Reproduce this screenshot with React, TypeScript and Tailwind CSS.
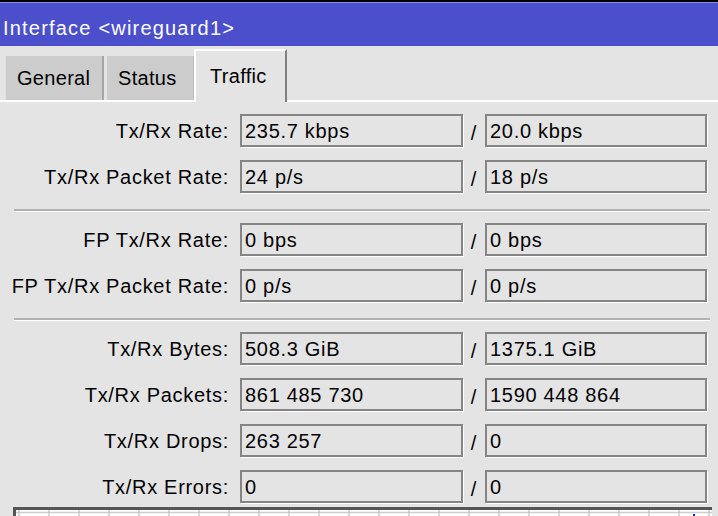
import React from 'react';

type Row = { label: string; tx: string; rx: string };

const sections: Row[][] = [
  [
    { label: 'Tx/Rx Rate:', tx: '235.7 kbps', rx: '20.0 kbps' },
    { label: 'Tx/Rx Packet Rate:', tx: '24 p/s', rx: '18 p/s' },
  ],
  [
    { label: 'FP Tx/Rx Rate:', tx: '0 bps', rx: '0 bps' },
    { label: 'FP Tx/Rx Packet Rate:', tx: '0 p/s', rx: '0 p/s' },
  ],
  [
    { label: 'Tx/Rx Bytes:', tx: '508.3 GiB', rx: '1375.1 GiB' },
    { label: 'Tx/Rx Packets:', tx: '861 485 730', rx: '1590 448 864' },
    { label: 'Tx/Rx Drops:', tx: '263 257', rx: '0' },
    { label: 'Tx/Rx Errors:', tx: '0', rx: '0' },
  ],
];

const Field: React.FC<{ value: string; width: string }> = ({ value, width }) => (
  <div
    className={`${width} h-[33px] shrink-0 border-2 border-[#858585] shadow-[1px_1px_0_#ffffff] flex items-center pl-[3px] whitespace-nowrap overflow-hidden`}
  >
    {value}
  </div>
);

const StatRow: React.FC<{ row: Row }> = ({ row }) => (
  <div className="flex items-center h-[33px] shrink-0 tracking-[0.7px]">
    <div className="w-[229px] shrink-0 text-right whitespace-nowrap">{row.label}</div>
    <div className="w-[11px] shrink-0" />
    <Field value={row.tx} width="w-[223px]" />
    <div className="w-[22px] shrink-0 text-center pt-[4px]">/</div>
    <Field value={row.rx} width="w-[222px]" />
  </div>
);

export default function App() {
  return (
    <div
      className="w-[718px] h-[516px] overflow-hidden bg-[#e4e4e4] text-[20px] text-black leading-none flex flex-col"
      style={{ fontFamily: '"Liberation Sans", Arial, sans-serif' }}
    >
      {/* title bar */}
      <div className="shrink-0 border-t-2 border-black">
        <div className="h-px bg-[#8c8ee2]" />
        <div className="h-[43px] bg-[#4b4fcc] text-white flex items-center pl-[3px] pt-[6px] tracking-[1.2px]">
          Interface &lt;wireguard1&gt;
        </div>
      </div>

      {/* tabs */}
      <div className="shrink-0 h-[56px] flex items-end pl-[5px] border-b-2 border-white tracking-[0.3px]">
        <div className="w-[99px] h-[44px] bg-[#cccccc] border-l border-[#e0e0e0] border-r-2 border-r-[#a6a6a6] flex items-center pl-[11px]">
          General
        </div>
        <div className="w-[3px]" />
        <div className="w-[87px] h-[44px] bg-[#cccccc] border-r border-r-[#bcbcbc] flex items-center pl-[11px]">
          Status
        </div>
        <div className="w-[93px] h-[53px] -mb-[2px] bg-[#e4e4e4] border-t-2 border-l-2 border-white border-r-2 border-r-[#808080] flex items-start pt-[15px] pl-[14px]">
          Traffic
        </div>
      </div>

      {/* content */}
      <div className="shrink-0 flex flex-col pt-[12px]">
        {sections.map((rows, i) => (
          <React.Fragment key={i}>
            {i > 0 && (
              <div className="shrink-0 ml-[14px] w-[696px] mt-[16px] mb-[11px] h-[3px] border-t-2 border-[#b2b2b2] border-b border-b-white" />
            )}
            <div className="flex flex-col gap-[13px]">
              {rows.map((r) => (
                <StatRow key={r.label} row={r} />
              ))}
            </div>
          </React.Fragment>
        ))}
      </div>

      {/* graph */}
      <div className="shrink-0 ml-[13px] mt-[4px] w-[699px] h-[24px] border-t-[3px] border-l-[3px] border-[#555555] bg-white overflow-hidden">
        <svg width="696" height="21" className="block">
          <line x1="0" y1="2.5" x2="696" y2="2.5" stroke="#d0d0d0" strokeWidth="1.5" />
          {Array.from({ length: 24 }, (_, k) => (
            <line key={k} x1={3 + k * 30} y1="0" x2={3 + k * 30} y2="21" stroke="#c8c8c8" strokeWidth="1.5" />
          ))}
          <line x1="678" y1="4" x2="678" y2="21" stroke="#1a1aff" strokeWidth="2" />
        </svg>
      </div>
    </div>
  );
}
